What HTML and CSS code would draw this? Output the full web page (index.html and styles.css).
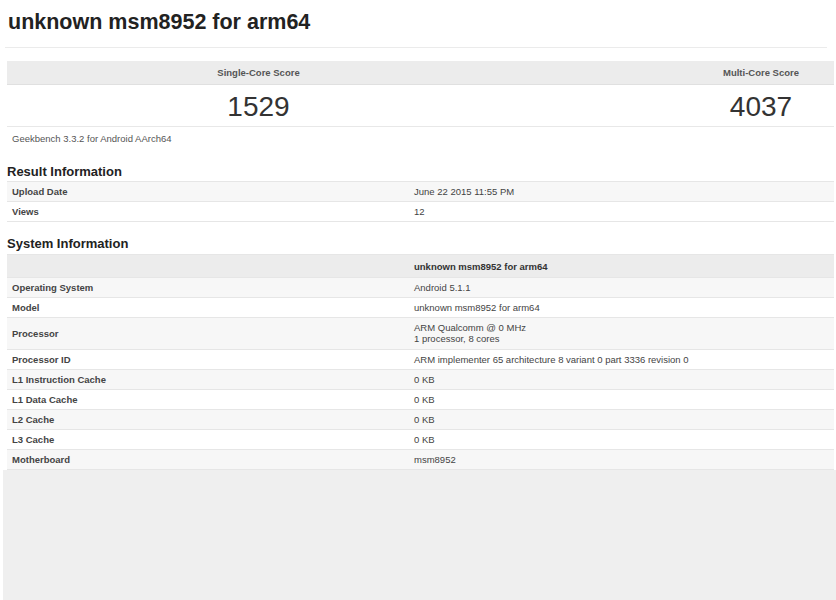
FILE: index.html
```html
<!DOCTYPE html>
<html>
<head>
<meta charset="utf-8">
<link rel="stylesheet" href="styles.css">
</head>
<body>
<div class="page">
  <h1 class="title">unknown msm8952 for arm64</h1>
  <div class="rule"></div>
  <div class="scores">
    <div class="score-head">
      <div class="sc-left">Single-Core Score</div>
      <div></div>
      <div class="sc-right">Multi-Core Score</div>
    </div>
    <div class="score-vals">
      <div class="sc-left">1529</div>
      <div></div>
      <div class="sc-right">4037</div>
    </div>
  </div>
  <div class="version">Geekbench 3.3.2 for Android AArch64</div>

  <h2 class="section">Result Information</h2>
  <div class="table">
    <div class="row alt"><div class="k">Upload Date</div><div class="v">June 22 2015 11:55 PM</div></div>
    <div class="row"><div class="k">Views</div><div class="v">12</div></div>
  </div>

  <h2 class="section sys">System Information</h2>
  <div class="table">
    <div class="row head"><div class="k"></div><div class="v">unknown msm8952 for arm64</div></div>
    <div class="row alt"><div class="k">Operating System</div><div class="v">Android 5.1.1</div></div>
    <div class="row"><div class="k">Model</div><div class="v">unknown msm8952 for arm64</div></div>
    <div class="row alt tall"><div class="k">Processor</div><div class="v">ARM Qualcomm @ 0 MHz<br>1 processor, 8 cores</div></div>
    <div class="row"><div class="k">Processor ID</div><div class="v">ARM implementer 65 architecture 8 variant 0 part 3336 revision 0</div></div>
    <div class="row alt"><div class="k">L1 Instruction Cache</div><div class="v">0 KB</div></div>
    <div class="row"><div class="k">L1 Data Cache</div><div class="v">0 KB</div></div>
    <div class="row alt"><div class="k">L2 Cache</div><div class="v">0 KB</div></div>
    <div class="row"><div class="k">L3 Cache</div><div class="v">0 KB</div></div>
    <div class="row alt"><div class="k">Motherboard</div><div class="v">msm8952</div></div>
  </div>
</div>
<div class="footer-area"></div>
</body>
</html>
```

FILE: styles.css
```css
html, body {
  margin: 0;
  padding: 0;
  background: #fff;
}
body {
  font-family: "Liberation Sans", Arial, sans-serif;
  color: #333;
  overflow: hidden;
  height: 600px;
}
.page {
  padding: 0 2px 0 7px;
}
.title {
  margin: 0;
  padding: 10px 0 0 1px;
  height: 37px;
  font-size: 21.5px;
  line-height: 24px;
  font-weight: bold;
  color: #222;
}
.rule {
  height: 1px;
  background: #ebebeb;
  margin: 0 7px 13px -2px;
}
.score-head {
  display: grid;
  grid-template-columns: 503px 1fr 146px;
  height: 23px;
  background: #ececec;
  border-bottom: 1px solid #e0e0e0;
  font-size: 9.5px;
  font-weight: bold;
  color: #555;
  line-height: 23px;
}
.score-vals {
  display: grid;
  grid-template-columns: 503px 1fr 146px;
  height: 41px;
  font-size: 28px;
  line-height: 43px;
  color: #333;
  border-bottom: 1px solid #e8e8e8;
}
.sc-left, .sc-right {
  text-align: center;
}
.version {
  font-size: 9.5px;
  color: #555;
  padding: 6px 0 0 5px;
  height: 28px;
  line-height: 11px;
}
.section {
  margin: 0;
  font-size: 13px;
  font-weight: bold;
  color: #222;
  height: 18px;
  line-height: 17px;
  padding: 2px 0 0 0;
}
.section.sys {
  margin-top: 11px;
  height: 19px;
}
.table {
  border-top: 1px solid #e6e6e6;
}
.row {
  display: grid;
  grid-template-columns: 407px 1fr;
  height: 19px;
  border-bottom: 1px solid #e6e6e6;
  font-size: 9.5px;
  line-height: 11px;
  color: #444;
  background: #fff;
}
.row.alt {
  background: #f7f7f7;
}
.row.head {
  background: #ececec;
  height: 22px;
  font-weight: bold;
  color: #333;
}
.row.tall {
  height: 31px;
}
.k {
  font-weight: bold;
  padding: 4px 0 0 5px;
}
.v {
  padding: 4px 0 0 0;
}
.row.head .v {
  padding-top: 6px;
}
.row.tall .k {
  padding-top: 10px;
}
.row.tall .v {
  padding-top: 4px;
}
.footer-area {
  margin: 0 0 0 3px;
  height: 140px;
  background: #efefef;
}
```
